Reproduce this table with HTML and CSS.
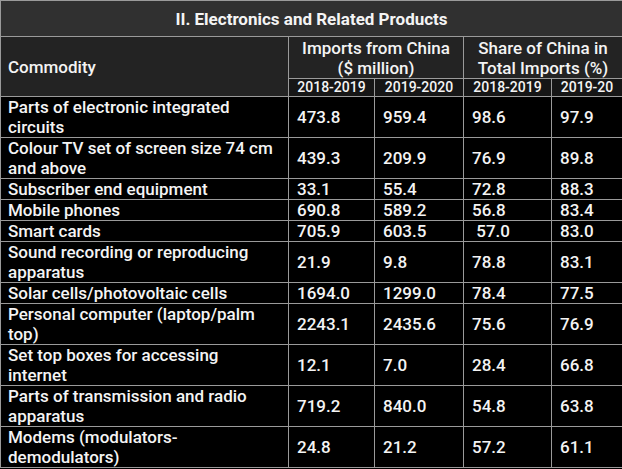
FILE: index.html
```html
<!DOCTYPE html>
<html>
<head>
<meta charset="utf-8">
<link rel="stylesheet" href="styles.css">
</head>
<body>
<table class="tbl">
  <colgroup>
    <col class="c-name"><col class="c-a"><col class="c-b"><col class="c-c"><col class="c-d">
  </colgroup>
  <thead>
    <tr class="title"><th colspan="5">II. Electronics and Related Products</th></tr>
    <tr class="head">
      <th rowspan="2" class="commodity">Commodity</th>
      <th colspan="2">Imports from China<br>($ million)</th>
      <th colspan="2">Share of China in<br>Total Imports (%)</th>
    </tr>
    <tr class="sub">
      <th>2018-2019</th><th>2019-2020</th><th>2018-2019</th><th>2019-20</th>
    </tr>
  </thead>
  <tbody>
    <tr class="two"><td>Parts of electronic integrated circuits</td><td>473.8</td><td>959.4</td><td>98.6</td><td>97.9</td></tr>
    <tr class="two"><td>Colour TV set of screen size 74 cm and above</td><td>439.3</td><td>209.9</td><td>76.9</td><td>89.8</td></tr>
    <tr class="one"><td>Subscriber end equipment</td><td>33.1</td><td>55.4</td><td>72.8</td><td>88.3</td></tr>
    <tr class="one"><td>Mobile phones</td><td>690.8</td><td>589.2</td><td>56.8</td><td>83.4</td></tr>
    <tr class="one"><td>Smart cards</td><td>705.9</td><td>603.5</td><td>&nbsp;57.0</td><td>83.0</td></tr>
    <tr class="two"><td>Sound recording or reproducing apparatus</td><td>21.9</td><td>9.8</td><td>78.8</td><td>83.1</td></tr>
    <tr class="one"><td>Solar cells/photovoltaic cells</td><td>1694.0</td><td>1299.0</td><td>78.4</td><td>77.5</td></tr>
    <tr class="two"><td>Personal computer (laptop/palm top)</td><td>2243.1</td><td>2435.6</td><td>75.6</td><td>76.9</td></tr>
    <tr class="two"><td>Set top boxes for accessing internet</td><td>12.1</td><td>7.0</td><td>28.4</td><td>66.8</td></tr>
    <tr class="two"><td>Parts of transmission and radio apparatus</td><td>719.2</td><td>840.0</td><td>54.8</td><td>63.8</td></tr>
    <tr class="two"><td>Modems (modulators-demodulators)</td><td>24.8</td><td>21.2</td><td>57.2</td><td>61.1</td></tr>
  </tbody>
</table>
</body>
</html>
```
FILE: styles.css
```css
html, body {
  margin: 0;
  padding: 0;
  background: #000;
}
.tbl {
  border-collapse: collapse;
  table-layout: fixed;
  width: 622px;
  font-family: Roboto, "Liberation Sans", sans-serif;
  color: #f4f4f4;
  font-weight: 500;
  font-size: 17px;
}
.c-name { width: 288px; }
.c-a { width: 86px; }
.c-b { width: 89px; }
.c-c { width: 88px; }
.c-d { width: 71px; }
.tbl th, .tbl td {
  border: 1px solid #9a9a9a;
  padding: 0 7px;
  line-height: 20px;
  vertical-align: middle;
}
.title th {
  background: #303030;
  font-weight: 700;
  font-size: 17px;
  height: 35px;
  text-align: center;
}
.head th {
  background: #232323;
  font-weight: 500;
  font-size: 17px;
  text-align: center;
  height: 41px;
  line-height: 20px;
}
.head th.commodity {
  text-align: left;
}
.sub th {
  background: #161616;
  font-weight: 500;
  font-size: 14px;
  line-height: 17px;
  height: 17px;
  padding: 0;
  text-align: center;
}
.tbl td {
  background: #000;
  text-align: left;
}
.tbl td + td {
  padding-left: 8px;
}
.two td { height: 40px; }
.one td { height: 20px; }
```
